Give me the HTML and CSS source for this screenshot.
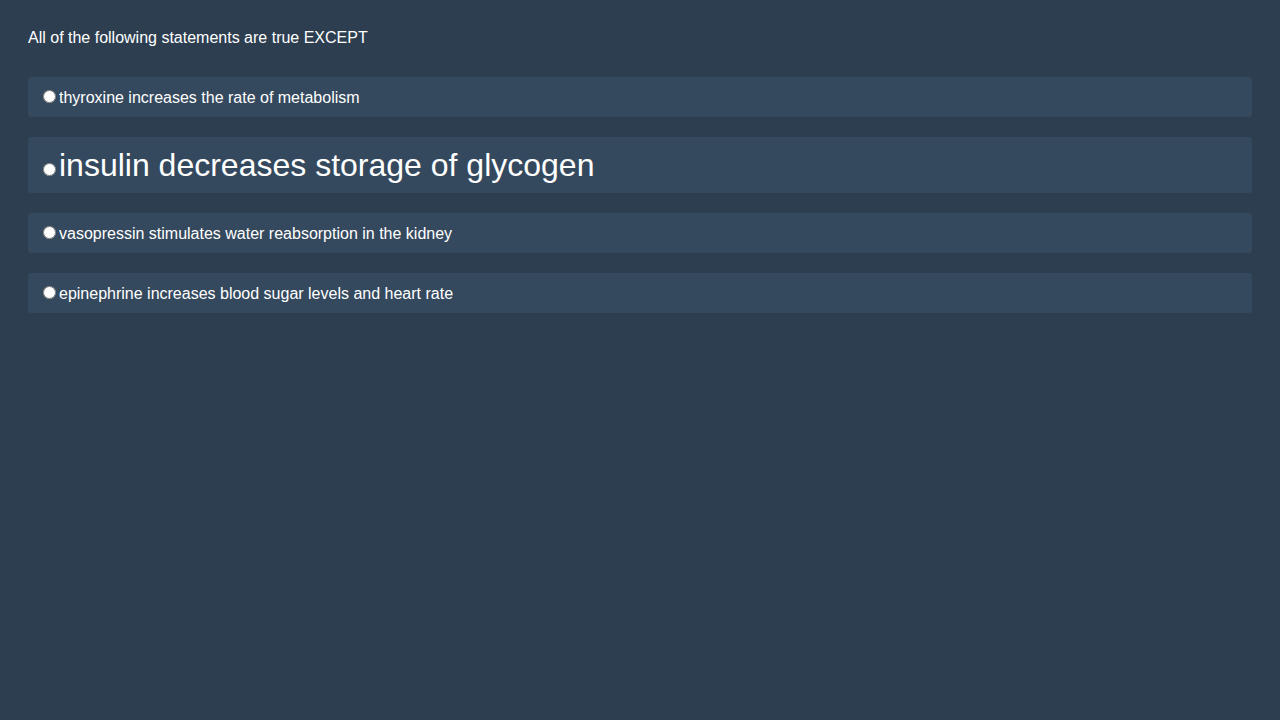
FILE: index.html
```html
<!DOCTYPE html>
<html lang="en">
<head>
<meta charset="utf-8">
<title>Question</title>
<link rel="stylesheet" href="styles.css">
</head>
<body>
<div class="quiz">
  <p class="question">All of the following statements are true EXCEPT</p>
  <label class="option"><input type="radio" name="q">thyroxine increases the rate of metabolism</label>
  <label class="option big"><input type="radio" name="q">insulin decreases storage of glycogen</label>
  <label class="option"><input type="radio" name="q">vasopressin stimulates water reabsorption in the kidney</label>
  <label class="option"><input type="radio" name="q">epinephrine increases blood sugar levels and heart rate</label>
</div>
</body>
</html>
```
FILE: styles.css
```css
html, body {
  margin: 0;
  padding: 0;
  background: #2c3e50;
  height: 100%;
}
body {
  font-family: "Liberation Sans", Arial, sans-serif;
  color: #ffffff;
  font-size: 16px;
}
.quiz {
  padding: 28px;
  display: flex;
  flex-direction: column;
}
.question {
  margin: 1px 0 30px 0;
  line-height: 18px;
}
.option {
  display: block;
  background: #34495e;
  border-radius: 3px;
  padding: 10px;
  margin-bottom: 20px;
  line-height: 19px;
}
.option.big {
  font-size: 32px;
  line-height: 36px;
}
.option input {
  margin: 3px 3px 0 5px;
}
```
